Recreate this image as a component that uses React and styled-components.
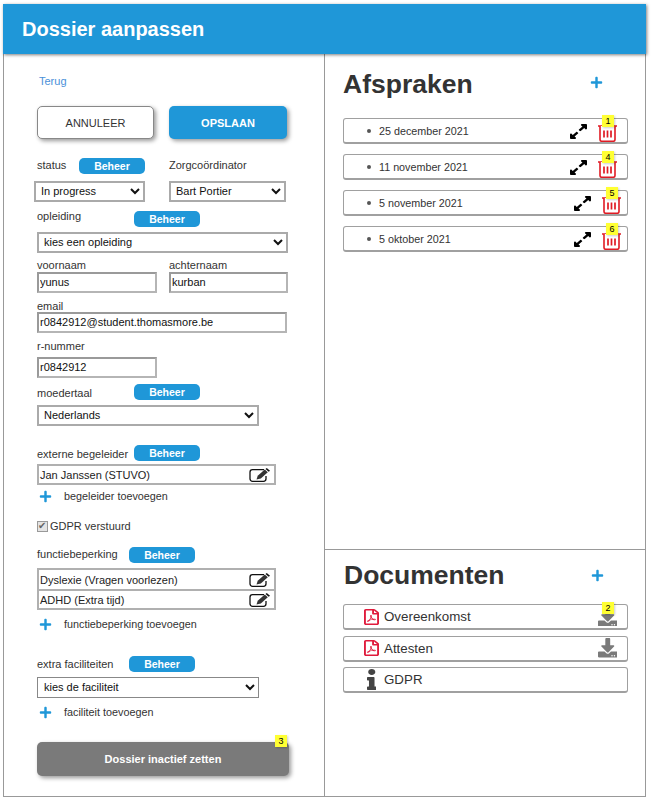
import React from "react";
import styled, { createGlobalStyle } from "styled-components";
import { FaPlus, FaExpandAlt, FaRegFilePdf, FaInfo, FaDownload } from "react-icons/fa";

const afspraken = [
  { datum: "25 december 2021", badge: 1, shift: 0 },
  { datum: "11 november 2021", badge: 4, shift: 0 },
  { datum: "5 november 2021", badge: 5, shift: 4 },
  { datum: "5 oktober 2021", badge: 6, shift: 4 },
];

const EditIcon = () => (
  <svg width="22" height="14" viewBox="0 0 22 14">
    <path d="M15 1.700H3.500A2.500 2.500 0 0 0 1 4.200v6.600a2.500 2.500 0 0 0 2.500 2.500h11a2.500 2.500 0 0 0 2.500-2.500V8" fill="none" stroke="#111" strokeWidth="1.300" />
    <path d="M7.500 11.500l1.200-3.700L15.800 1.500l3 2.700-7 6.300z" fill="#333" />
    <path d="M16.500 1l1.300-1 3.200 2.700-1.300 1.100z" fill="#111" />
  </svg>
);

const TrashIcon = () => (
  <svg width="19" height="17" viewBox="0 0 19 17">
    <path d="M0 1h19" stroke="#e01b24" strokeWidth="1.500" />
    <path d="M2 1v13.500a1.800 1.800 0 0 0 1.800 1.800h11.400a1.800 1.800 0 0 0 1.800-1.800V1" fill="#fff" stroke="#e01b24" strokeWidth="1.600" />
    <path d="M6 5.500v7M9.500 5.500v7M13 5.500v7" stroke="#e01b24" strokeWidth="1.700" />
  </svg>
);

const Select = ({ value, $w, $thin }) => (
  <Dropdown $w={$w} $thin={$thin} defaultValue={value}>
    <option>{value}</option>
  </Dropdown>
);

const Toevoegen = ({ children, $top }) => (
  <AddRow $top={$top}>
    <FaPlus color="#1f97d8" size={13} />
    <AddText>{children}</AddText>
  </AddRow>
);

export default function App() {
  return (
    <>
      <GlobalStyle />
      <Page>
        <Header>Dossier aanpassen</Header>
        <Columns>
          <Left>
            <BackLink href="#">Terug</BackLink>
            <ButtonRow>
              <CancelButton>ANNULEER</CancelButton>
              <SaveButton>OPSLAAN</SaveButton>
            </ButtonRow>

            <TwoCols $top={19}>
              <LabelRow $at={42}>
                <Label $up={2}>status</Label>
                <Beheer>Beheer</Beheer>
              </LabelRow>
              <Label $up={2}>Zorgcoördinator</Label>
            </TwoCols>
            <TwoCols $top={7}>
              <Shifted><Select value="In progress" $w={111} /></Shifted>
              <Select value="Bart Portier" $w={117} />
            </TwoCols>

            <LabelRow $top={8} $at={97}>
              <Label $up={4}>opleiding</Label>
              <Beheer>Beheer</Beheer>
            </LabelRow>
            <Block $top={6}><Select value="kies een opleiding" $w={251} /></Block>

            <TwoCols $top={6}>
              <Label>voornaam</Label>
              <Label>achternaam</Label>
            </TwoCols>
            <TwoCols>
              <TextInput defaultValue="yunus" $w={120} />
              <TextInput defaultValue="kurban" $w={119} />
            </TwoCols>

            <Label $top={7}>email</Label>
            <Block $top={-1}><TextInput defaultValue="r0842912@student.thomasmore.be" $w={250} /></Block>

            <Label $top={7}>r-nummer</Label>
            <Block $top={4}><TextInput defaultValue="r0842912" $w={120} /></Block>

            <LabelRow $top={6} $at={97}>
              <Label $top={3}>moedertaal</Label>
              <Beheer>Beheer</Beheer>
            </LabelRow>
            <Block $top={5}><Select value="Nederlands" $w={222} /></Block>

            <LabelRow $top={19} $at={97}>
              <Label $top={2}>externe begeleider</Label>
              <Beheer>Beheer</Beheer>
            </LabelRow>
            <Block $top={3}>
              <EditItem>Jan Janssen (STUVO)<EditIcon /></EditItem>
            </Block>
            <Toevoegen $top={4}>begeleider toevoegen</Toevoegen>

            <GdprRow>
              <Check type="checkbox" defaultChecked />
              <GdprText>GDPR verstuurd</GdprText>
            </GdprRow>

            <LabelRow $top={13} $at={92}>
              <Label $up={2}>functiebeperking</Label>
              <Beheer>Beheer</Beheer>
            </LabelRow>
            <Block $top={5}>
              <EditItem>Dyslexie (Vragen voorlezen)<EditIcon /></EditItem>
              <EditItem>ADHD (Extra tijd)<EditIcon /></EditItem>
            </Block>
            <Toevoegen $top={7}>functiebeperking toevoegen</Toevoegen>

            <LabelRow $top={24} $at={92}>
              <Label>extra faciliteiten</Label>
              <Beheer>Beheer</Beheer>
            </LabelRow>
            <Block $top={5}><Select value="kies de faciliteit" $w={222} $thin /></Block>
            <Toevoegen $top={7}>faciliteit toevoegen</Toevoegen>

            <InactiveButton>
              Dossier inactief zetten
              <Badge $right={2} $top={-7}>3</Badge>
            </InactiveButton>
          </Left>

          <Right>
            <TopSection>
              <TitleRow $pad={24}>
                <Title>Afspraken</Title>
                <TitlePlus $up={4} />
              </TitleRow>
              <List $top={18} $gap={10}>
                {afspraken.map((a) => (
                  <ListRow key={a.badge}>
                    <Bullet />
                    <DateText>{a.datum}</DateText>
                    <Actions $shift={a.shift}>
                      <ExpandIcon preserveAspectRatio="none" />
                      <TrashWrap>
                        <TrashIcon />
                        <Badge $right={3} $top={-10}>{a.badge}</Badge>
                      </TrashWrap>
                    </Actions>
                  </ListRow>
                ))}
              </List>
            </TopSection>

            <BottomSection>
              <TitleRow $pad={23}>
                <Title $indent={1}>Documenten</Title>
                <TitlePlus />
              </TitleRow>
              <List $top={13} $gap={5.5}>
                <ListRow>
                  <DocIcon><PdfIcon preserveAspectRatio="none" /></DocIcon>
                  <DocText>Overeenkomst</DocText>
                  <DownloadWrap>
                    <FaDownload color="#7a7a7a" size={19.500} />
                    <Badge $right={3} $top={-5}>2</Badge>
                  </DownloadWrap>
                </ListRow>
                <ListRow>
                  <DocIcon><PdfIcon preserveAspectRatio="none" /></DocIcon>
                  <DocText>Attesten</DocText>
                  <DownloadWrap>
                    <FaDownload color="#7a7a7a" size={19.500} />
                  </DownloadWrap>
                </ListRow>
                <ListRow>
                  <DocIcon><InfoIcon preserveAspectRatio="none" /></DocIcon>
                  <DocText>GDPR</DocText>
                </ListRow>
              </List>
            </BottomSection>
          </Right>
        </Columns>
      </Page>
    </>
  );
}

const GlobalStyle = createGlobalStyle`
  html, body {
    margin: 0;
    padding: 0;
    background: #fff;
    font-family: "Liberation Sans", Arial, sans-serif;
  }
`;

const Page = styled.div`
  width: 643px;
  margin: 4px 0 0 3px;
`;

const Header = styled.header`
  height: 50px;
  background: #1f97d8;
  color: #fff;
  font-size: 20px;
  font-weight: 700;
  line-height: 50px;
  padding-left: 19px;
  box-shadow: 1px 1px 3px rgba(0, 0, 0, 0.5);
  position: relative;
`;

const Columns = styled.div`
  display: grid;
  grid-template-columns: 321px 320px;
  height: 743px;
  border: 1px solid #999;
  border-top: none;
  box-sizing: border-box;
`;

const Left = styled.div`
  border-right: 1px solid #999;
  padding: 21px 0 0 33px;
  display: flex;
  flex-direction: column;
  align-items: flex-start;
  font-size: 11px;
  color: #333;
`;

const BackLink = styled.a`
  font-size: 11px;
  line-height: 13px;
  color: #4a90d9;
  text-decoration: none;
  margin-left: 2px;
`;

const ButtonRow = styled.div`
  display: flex;
  gap: 15px;
  margin-top: 18px;
`;

const CancelButton = styled.button`
  width: 117px;
  height: 33px;
  box-sizing: border-box;
  background: #fff;
  border: 1px solid #888;
  border-radius: 5px;
  box-shadow: 2px 2px 4px rgba(0, 0, 0, 0.4);
  font-family: inherit;
  font-size: 11px;
  color: #333;
  padding: 0;
`;

const SaveButton = styled(CancelButton)`
  width: 118px;
  background: #1f97d8;
  border: none;
  color: #fff;
  font-weight: 700;
`;

const TwoCols = styled.div`
  display: grid;
  grid-template-columns: 132px 1fr;
  width: 260px;
  align-items: center;
  margin-top: ${(p) => p.$top || 0}px;
`;

const LabelRow = styled.div`
  display: grid;
  grid-template-columns: ${(p) => p.$at}px 66px;
  align-items: center;
  height: 16px;
  margin-top: ${(p) => p.$top || 0}px;
`;

const Label = styled.div`
  font-size: 11px;
  line-height: 13px;
  color: #333;
  white-space: nowrap;
  margin-top: ${(p) => p.$top || 0}px;
  margin-bottom: ${(p) => p.$up || 0}px;
`;

const Beheer = styled.button`
  width: 66px;
  height: 16px;
  padding: 0;
  border: none;
  border-radius: 5px;
  background: #1f97d8;
  color: #fff;
  font-family: inherit;
  font-size: 10.500px;
  font-weight: 700;
`;

const Shifted = styled.div`
  margin-left: -3px;
`;

const Block = styled.div`
  margin-top: ${(p) => p.$top || 0}px;
`;

const Dropdown = styled.select`
  display: block;
  width: ${(p) => p.$w}px;
  height: 21px;
  box-sizing: border-box;
  border: ${(p) => (p.$thin ? "1px solid #888" : "2px solid #aaa")};
  background: #fff;
  font-family: inherit;
  font-size: 11px;
  color: #111;
  padding: 0 ${(p) => (p.$thin ? 2 : 1)}px 2px;
`;

const TextInput = styled.input`
  display: block;
  width: ${(p) => p.$w}px;
  height: 21px;
  box-sizing: border-box;
  border: 2px solid;
  border-color: #9a9a9a #b5b5b5 #b5b5b5 #9a9a9a;
  background: #fff;
  font-family: inherit;
  font-size: 11px;
  color: #111;
  padding: 0 1px 2px;
`;

const EditItem = styled.div`
  display: flex;
  align-items: center;
  justify-content: space-between;
  width: 239px;
  height: 21px;
  box-sizing: border-box;
  border: 2px solid #b0b0b0;
  padding: 0 3px 0 1px;
  font-size: 11px;
  color: #222;
  background: #fff;

  &:not(:last-child) {
    border-bottom: none;
  }
`;

const AddRow = styled.div`
  display: flex;
  align-items: center;
  margin: ${(p) => p.$top || 0}px 0 0 2px;
  height: 15px;
`;

const AddText = styled.span`
  font-size: 10.800px;
  color: #333;
  margin: 0 0 2px 12px;
`;

const GdprRow = styled.div`
  display: flex;
  align-items: center;
  margin-top: 15px;
  height: 15px;
`;

const Check = styled.input`
  appearance: none;
  box-sizing: border-box;
  margin: 0;
  width: 11px;
  height: 11px;
  border: 1px solid #999;
  background: #e4e4e4;
  position: relative;

  &::after {
    content: "✔";
    position: absolute;
    left: 0;
    top: -2px;
    font-size: 10px;
    line-height: 12px;
    color: #666;
  }
`;

const GdprText = styled.span`
  font-size: 11px;
  color: #333;
  margin: 0 0 2px 2px;
`;

const InactiveButton = styled.button`
  position: relative;
  width: 252px;
  height: 34px;
  margin-top: 22px;
  background: #7a7a7a;
  border: none;
  border-radius: 5px;
  box-shadow: 2px 2px 4px rgba(0, 0, 0, 0.4);
  color: #fff;
  font-family: inherit;
  font-size: 11px;
  font-weight: 700;
  padding: 0;
`;

const Badge = styled.span`
  position: absolute;
  right: ${(p) => p.$right}px;
  top: ${(p) => p.$top}px;
  width: 12px;
  height: 12px;
  background: #ffff33;
  color: #000;
  font-family: "Liberation Sans", Arial, sans-serif;
  font-size: 9px;
  font-weight: 400;
  line-height: 12px;
  text-align: center;
  box-shadow: 1px 1px 2px rgba(0, 0, 0, 0.2);
`;

const Right = styled.div`
  display: flex;
  flex-direction: column;
`;

const TopSection = styled.section`
  height: 496px;
  box-sizing: border-box;
  border-bottom: 1px solid #999;
  padding: 15px 18px 0 18px;
`;

const BottomSection = styled.section`
  flex: 1;
  padding: 10px 18px 0 18px;
`;

const TitleRow = styled.div`
  display: flex;
  align-items: center;
  justify-content: space-between;
  padding-right: ${(p) => p.$pad}px;
`;

const Title = styled.h2`
  margin: 0 0 0 ${(p) => p.$indent || 0}px;
  font-size: 26.500px;
  line-height: 31px;
  font-weight: 700;
  color: #333;
`;

const TitlePlus = styled(FaPlus)`
  color: #1f97d8;
  width: 13px;
  height: 13px;
  margin-bottom: ${(p) => p.$up || 0}px;
`;

const List = styled.div`
  display: flex;
  flex-direction: column;
  gap: ${(p) => p.$gap}px;
  margin-top: ${(p) => p.$top}px;
`;

const ListRow = styled.div`
  display: flex;
  align-items: center;
  width: 285px;
  height: 26px;
  box-sizing: border-box;
  border: 1px solid #a0a0a0;
  border-bottom-width: 2px;
  border-radius: 3px;
  background: #fff;
`;

const Bullet = styled.span`
  width: 4px;
  height: 4px;
  border-radius: 50%;
  background: #555;
  margin-left: 23px;
`;

const DateText = styled.span`
  margin-left: 8px;
  font-size: 10.750px;
  color: #333;
`;

const Actions = styled.div`
  margin-left: auto;
  align-self: stretch;
  display: flex;
  align-items: flex-start;
  gap: 11px;
  margin-right: ${(p) => 10 - p.$shift}px;
`;

const ExpandIcon = styled(FaExpandAlt)`
  width: 17px;
  height: 17px;
  margin-top: 4px;
  color: #000;
`;

const TrashWrap = styled.div`
  position: relative;
  height: 17px;
  margin-top: 6px;
`;

const DocIcon = styled.span`
  width: 15px;
  display: flex;
  justify-content: center;
  margin-left: 20px;
`;

const PdfIcon = styled(FaRegFilePdf)`
  width: 15px;
  height: 16px;
  color: #e01b3c;
`;

const InfoIcon = styled(FaInfo)`
  width: 9.500px;
  height: 21px;
  color: #444;
`;

const DocText = styled.span`
  font-size: 13.330px;
  color: #333;
  margin-left: 5px;
`;

const DownloadWrap = styled.span`
  display: flex;
  margin-left: auto;
  margin-right: 10px;
  position: relative;
`;
